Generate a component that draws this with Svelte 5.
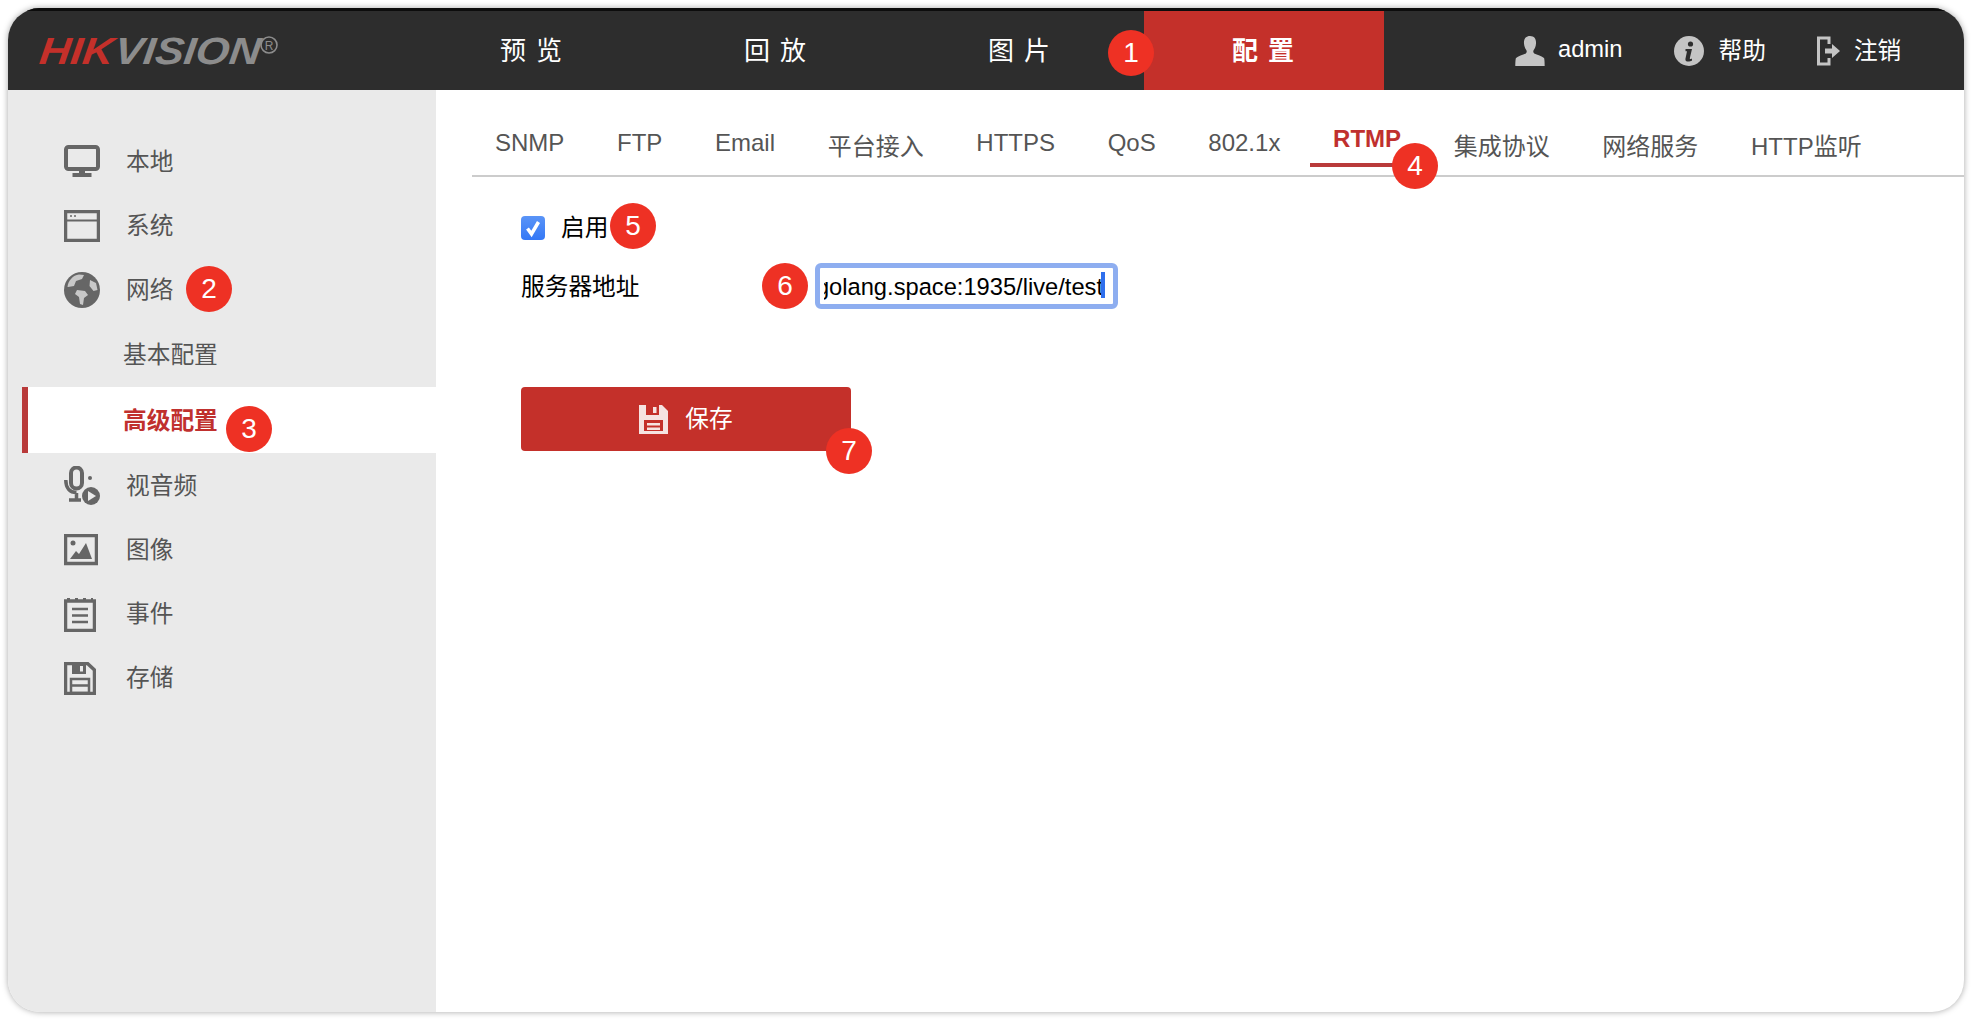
<script>
	const navItems = [
		{ label: '预览' },
		{ label: '回放' },
		{ label: '图片' },
		{ label: '配置', active: true }
	];
	const tabs = [
		{ label: 'SNMP' },
		{ label: 'FTP' },
		{ label: 'Email' },
		{ label: '平台接入', cjk: true },
		{ label: 'HTTPS' },
		{ label: 'QoS' },
		{ label: '802.1x' },
		{ label: 'RTMP', active: true },
		{ label: '集成协议', cjk: true },
		{ label: '网络服务', cjk: true },
		{ label: 'HTTP监听', cjk: true }
	];
	const badges = [
		{ n: 1, x: 1131, y: 53 },
		{ n: 2, x: 209, y: 289 },
		{ n: 3, x: 249, y: 429 },
		{ n: 4, x: 1415, y: 166 },
		{ n: 5, x: 633, y: 226 },
		{ n: 6, x: 785, y: 286 },
		{ n: 7, x: 849, y: 451 }
	];
</script>

<div class="window">
	<header class="topbar">
		<svg class="logo" width="250" height="40" viewBox="0 0 250 40">
			<g transform="skewX(-7)">
				<text x="4" y="31" textLength="74" lengthAdjust="spacingAndGlyphs" class="logo-text hik">HIK</text>
				<text x="79" y="31" textLength="146" lengthAdjust="spacingAndGlyphs" class="logo-text vision">VISION</text>
			</g>
			<circle cx="231" cy="12" r="8" fill="none" stroke="#8c8c8c" stroke-width="1.6" />
			<text x="231" y="16.5" text-anchor="middle" class="logo-r">R</text>
		</svg>
		<nav class="mainnav">
			{#each navItems as item}
				<a class="navlink" class:active={item.active} href="#top">{item.label}</a>
			{/each}
		</nav>
		<div class="userbar">
			<span class="useritem first">
				<svg width="30" height="30" viewBox="0 0 30 30">
					<path fill="#c4c4c4" d="M15 0c4.600 0 6.400 3.400 6 7.600-.2 2.600-1 5-2.400 6.600-.6 1.200-.4 2.600.6 3.200 3 1.400 7.800 2.400 9.800 4.600.6 1 .7 6 .7 8H.3c0-2 .1-7 .7-8 2-2.200 6.800-3.200 9.800-4.600 1-.6 1.200-2 .6-3.200C10 12.600 9.200 10.200 9 7.600 8.600 3.400 10.400 0 15 0z" />
				</svg>
				<span class="uname">admin</span>
			</span>
			<span class="useritem second">
				<svg width="30" height="30" viewBox="0 0 30 30">
					<circle cx="15" cy="15" r="15" fill="#c4c4c4" />
					<circle cx="16.500" cy="8" r="2.600" fill="#2d2d2d" />
					<path fill="#2d2d2d" d="M11.500 13h6.500l-2.200 9.200c-.2.900.6 1 2.200.2v2c-2 1.300-7 2.200-6.600-1.500L13 15.200h-1.500z" />
				</svg>
				<span>帮助</span>
			</span>
			<span class="useritem third">
				<svg width="24" height="30" viewBox="0 0 24 30">
					<path fill="none" stroke="#c4c4c4" stroke-width="3" d="M12 8V2H1.500v26H12v-6" />
					<path fill="#c4c4c4" d="M8 12.500h7V8l8 7-8 7v-4.500H8z" />
				</svg>
				<span>注销</span>
			</span>
		</div>
	</header>

	<div class="body">
		<aside class="sidebar">
			<a class="menuitem" href="#top">
				<svg width="36" height="34" viewBox="0 0 36 34">
					<rect x="2" y="2" width="32" height="22" rx="2.500" fill="none" stroke="#666" stroke-width="4" />
					<path fill="#666" d="M15 24h6v4h6.500v4h-19v-4H15z" />
				</svg>
				<span>本地</span>
			</a>
			<a class="menuitem" href="#top">
				<svg width="36" height="32" viewBox="0 0 36 32">
					<rect x="1.500" y="1.500" width="33" height="29" fill="none" stroke="#666" stroke-width="3.500" />
					<path stroke="#666" stroke-width="2" d="M2 10.500h32" />
					<path stroke="#888" stroke-width="2" stroke-dasharray="2 2" d="M6 6h8" />
				</svg>
				<span>系统</span>
			</a>
			<a class="menuitem" href="#top">
				<svg width="36" height="36" viewBox="0 0 36 36">
					<circle cx="18" cy="18" r="18" fill="#666" />
					<path fill="#eaeaea" d="M4 15l6-1 2-5 6-2 2-4-5-.5C9 3 4 9 3.500 15zM13 18l8 1 3 4-4 3-1 7-3-1-1-7-4-3zM26 8l6 3 1.500 7-4 1-4-5z" opacity=".75" />
				</svg>
				<span>网络</span>
			</a>
			<a class="subitem" href="#top">基本配置</a>
			<a class="subitem current" href="#top">高级配置</a>
			<a class="menuitem" href="#top">
				<svg width="36" height="40" viewBox="0 0 36 40">
					<rect x="7" y="1.500" width="11" height="21" rx="5.500" fill="none" stroke="#666" stroke-width="4" />
					<path fill="none" stroke="#666" stroke-width="3.500" d="M1.800 14c0 8 4 12.500 10.700 12.500M12.500 27v6M5 34h12" />
					<circle cx="26" cy="12" r="2" fill="#666" />
					<circle cx="27" cy="30" r="9" fill="#666" />
					<path fill="#eaeaea" d="M24 25l8 5-8 5z" />
				</svg>
				<span>视音频</span>
			</a>
			<a class="menuitem" href="#top">
				<svg width="34" height="32" viewBox="0 0 34 32">
					<rect x="1.500" y="1.500" width="31" height="28" fill="none" stroke="#666" stroke-width="3.500" />
					<circle cx="9" cy="9" r="2.500" fill="#666" />
					<path fill="#666" d="M6 25l6-8 3 3 7-11 6 16z" />
				</svg>
				<span>图像</span>
			</a>
			<a class="menuitem" href="#top">
				<svg width="32" height="36" viewBox="0 0 32 36">
					<rect x="1.500" y="5" width="29" height="29.500" fill="none" stroke="#666" stroke-width="3.500" />
					<path stroke="#666" stroke-width="3" stroke-dasharray="3 5" d="M3 3.500h26" />
					<path stroke="#666" stroke-width="2.500" d="M8 13h16M8 19.500h16M8 26h16" />
				</svg>
				<span>事件</span>
			</a>
			<a class="menuitem" href="#top">
				<svg width="32" height="33" viewBox="0 0 32 33">
					<path fill="none" stroke="#666" stroke-width="3.500" d="M1.500 1.500h22l7 6.500v23.500h-29z" />
					<path fill="#666" d="M8 1.500h14V12H8z" />
					<path fill="#eaeaea" d="M16 4h3v5.500h-3z" />
					<path fill="none" stroke="#666" stroke-width="2.500" d="M7 17h18v14H7zM7 23.500h18" />
				</svg>
				<span>存储</span>
			</a>
		</aside>

		<main class="content">
			<div class="tabs">
				{#each tabs as tab}
					<a class="tab" class:cjk={tab.cjk} class:active={tab.active} href="#top">{tab.label}</a>
				{/each}
			</div>
			<form class="form">
				<div class="row checkrow">
					<span class="check">
						<svg width="24" height="24" viewBox="0 0 24 24">
							<path fill="none" stroke="#fff" stroke-width="3.500" d="M6.500 12.500l4 5.500 7-12" />
						</svg>
					</span>
					<span class="checklabel">启用</span>
				</div>
				<div class="row addr">
					<span class="label">服务器地址</span>
					<div class="field">
						<div class="viewport">
							<span class="value">rtmp://golang.space:1935/live/test</span>
						</div>
						<span class="caret"></span>
					</div>
				</div>
				<button class="save" type="button">
					<svg width="29" height="29" viewBox="0 0 29 29">
						<path fill="#f6e3e1" d="M0 0h23l6 6v23H0z" />
						<path fill="#c4302a" d="M7 0h13v10H7zM5 15h19v11H5z" />
						<path fill="#f6e3e1" d="M14 2h3.500v6H14zM8 18h13v2.500H8zM8 22.500h13V25H8z" />
					</svg>
					<span>保存</span>
				</button>
			</form>
		</main>
	</div>

	{#each badges as b}
		<span class="badge" style:left="{b.x - 8}px" style:top="{b.y - 8}px">{b.n}</span>
	{/each}
</div>

<style>
	:global(body) {
		background: #fff;
	}

	.window {
		position: relative;
		box-sizing: border-box;
		width: 1956px;
		height: 1004px;
		margin: 8px;
		border-radius: 32px;
		box-shadow: 0 0 6px rgba(0, 0, 0, 0.35);
		background: #fff;
		overflow: hidden;
		display: flex;
		flex-direction: column;
		font-family: 'Liberation Sans', 'Noto Sans CJK SC', sans-serif;
		font-size: 23.7px;
		line-height: 28px;
		color: #555;
	}

	a {
		color: inherit;
		text-decoration: none;
	}

	.topbar {
		flex: none;
		box-sizing: border-box;
		height: 82px;
		border-top: 3px solid #0c0c0c;
		background: #2d2d2d;
		display: flex;
		color: #fff;
	}

	.logo {
		flex: none;
		margin: 22px 0 0 30px;
	}

	.logo-text {
		font: italic bold 38px 'Liberation Sans', sans-serif;
	}

	.hik {
		fill: #c4302a;
	}

	.vision {
		fill: #8c8c8c;
	}

	.logo-r {
		font: 12px 'Liberation Sans', sans-serif;
		fill: #8c8c8c;
	}

	.mainnav {
		display: flex;
		gap: 4px;
		margin-left: 124px;
	}

	.navlink {
		width: 240px;
		display: flex;
		align-items: center;
		justify-content: center;
		font-size: 26px;
		letter-spacing: 10px;
		text-indent: 8px;
	}

	.navlink.active {
		background: #c4302a;
		font-weight: 700;
	}

	.userbar {
		display: flex;
		align-items: center;
		color: #fff;
	}

	.useritem {
		display: flex;
		align-items: center;
	}

	.useritem.first {
		margin-left: 131px;
		gap: 13px;
	}

	.useritem.second {
		margin-left: 51px;
		gap: 15px;
	}

	.useritem.third {
		margin-left: 51px;
		gap: 13px;
	}

	.uname {
		padding-bottom: 3px;
	}

	.body {
		flex: 1;
		display: flex;
		min-height: 0;
	}

	.sidebar {
		flex: none;
		box-sizing: border-box;
		width: 428px;
		padding-top: 39px;
		background: #eaeaea;
		display: flex;
		flex-direction: column;
	}

	.menuitem {
		box-sizing: border-box;
		height: 64px;
		padding: 2px 0 0 56px;
		display: grid;
		grid-template-columns: 62px auto;
		align-items: center;
		justify-content: start;
	}

	.subitem {
		box-sizing: border-box;
		height: 66px;
		display: flex;
		align-items: center;
		padding: 2px 0 0 115px;
	}

	.subitem.current {
		margin-left: 14px;
		padding-left: 95px;
		border-left: 6px solid #b93a3a;
		background: #fff;
		color: #c0302e;
		font-weight: 700;
	}

	.content {
		flex: 1;
		min-width: 0;
	}

	.tabs {
		box-sizing: border-box;
		height: 87px;
		margin-left: 36px;
		padding-top: 35px;
		border-bottom: 2px solid #ccc;
		display: flex;
		align-items: flex-start;
		font-size: 24px;
	}

	.tab {
		position: relative;
		padding: 4px 23px 0;
		margin-right: 6.67px;
	}

	.tab.cjk {
		padding-top: 8px;
	}

	.tab.active {
		padding-top: 0;
		color: #c0302e;
		font-weight: 700;
	}

	.tab.active::after {
		content: '';
		position: absolute;
		left: 0;
		right: 0;
		top: 38px;
		height: 4px;
		background: #b93a3a;
	}

	.form {
		padding: 36px 0 0 85px;
	}

	.row {
		display: flex;
		align-items: center;
		color: #000;
	}

	.checkrow {
		height: 30px;
	}

	.check {
		width: 24px;
		height: 24px;
		border-radius: 4px;
		background: linear-gradient(#5a94f7, #3478f6);
	}

	.check svg {
		display: block;
	}

	.checklabel {
		margin-left: 16px;
	}

	.addr {
		height: 46px;
		margin-top: 20px;
	}

	.label {
		width: 294px;
		padding-top: 2px;
	}

	.field {
		position: relative;
		box-sizing: border-box;
		width: 303px;
		height: 46px;
		border: 5px solid #8eaef0;
		border-radius: 6px;
		padding: 2px 10px 0 4px;
		background: #fff;
	}

	.viewport {
		height: 100%;
		display: flex;
		align-items: center;
		justify-content: flex-end;
		overflow: hidden;
	}

	.value {
		flex: none;
		white-space: nowrap;
	}

	.caret {
		position: absolute;
		right: 8px;
		top: 4px;
		width: 4px;
		height: 26px;
		background: #2f6fed;
	}

	.save {
		box-sizing: border-box;
		width: 330px;
		height: 64px;
		margin-top: 78px;
		border: 0;
		border-radius: 4px;
		background: #c4302a;
		color: #fff;
		display: flex;
		align-items: center;
		justify-content: center;
		gap: 17px;
		font: inherit;
		padding: 0;
	}

	.badge {
		position: absolute;
		width: 46px;
		height: 46px;
		margin: -23px 0 0 -23px;
		border-radius: 50%;
		background: #ee3124;
		color: #fff;
		font-size: 28px;
		line-height: 46px;
		text-align: center;
	}
</style>
